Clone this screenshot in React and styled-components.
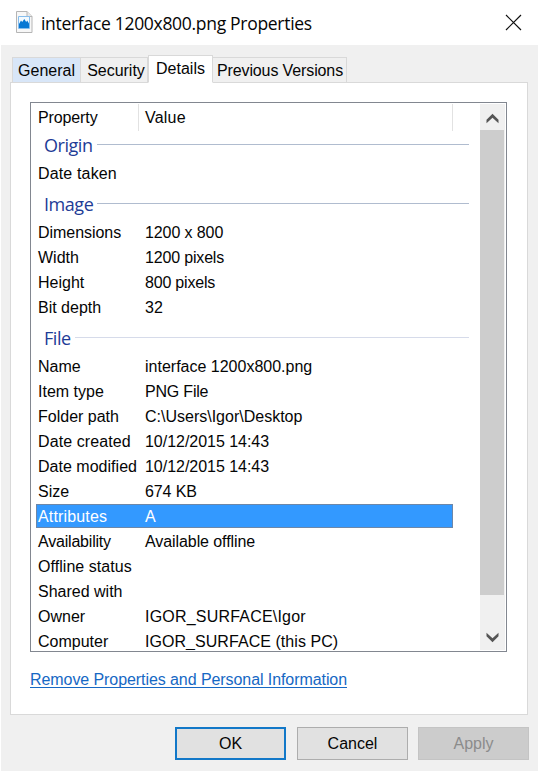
import React from "react";
import styled, { createGlobalStyle } from "styled-components";

const Global = createGlobalStyle`
  *, *::before, *::after { box-sizing: border-box; }
  html, body { margin: 0; background: #fff; }
  button { font: inherit; margin: 0; }
`;

const Dialog = styled.main`
  width: 539px;
  height: 772px;
  display: flex;
  flex-direction: column;
  overflow: hidden;
  background: #fff;
  color: #050505;
  font: 16px/25px "Liberation Sans", Arial, sans-serif;
  white-space: nowrap;
`;

const TitleBar = styled.header`
  height: 45px;
  flex: none;
  display: flex;
  align-items: center;
  padding: 0 17px 0 16px;
`;

const FileIcon = styled.svg`
  width: 17px;
  height: 22px;
  margin-top: -1px;
`;

const Title = styled.h1`
  margin: 0 0 0 8px;
  flex: 1;
  font: 400 17.5px/24px "Open Sans", "Noto Sans", sans-serif;
  letter-spacing: -0.3px;
`;

const CloseButton = styled.button`
  display: flex;
  padding: 0;
  border: 0;
  background: none;
  color: #111;
`;

const Body = styled.div`
  flex: none;
  height: 726px;
  margin: 0 1px;
  padding: 10px 9px 0;
  background: #f0f0f0;
`;

const Tabs = styled.nav`
  display: flex;
  align-items: flex-end;
  height: 28px;
  padding-left: 2px;
  margin-bottom: -1px;
`;

const Tab = styled.button`
  width: ${(p) => p.$width}px;
  height: ${(p) => (p.$active ? 28 : 26)}px;
  padding: 0 0 ${(p) => (p.$active ? 2 : 0)}px ${(p) => p.$inset || 0}px;
  line-height: 25px;
  border: 1px solid #d9d9d9;
  border-left-width: ${(p) => (p.$first || p.$active ? 1 : 0)}px;
  border-bottom-color: ${(p) => (p.$active ? "#fff" : "#d9d9d9")};
  background: ${(p) => (p.$active ? "#fff" : p.$hover ? "#d8e6f8" : "#f0f0f0")};
  color: inherit;
  text-align: center;
  letter-spacing: ${(p) => p.$track || 0}px;
`;

const Panel = styled.section`
  height: 633px;
  width: 518px;
  padding: 19px;
  border: 1px solid #d9d9d9;
  background: #fff;
`;

const ListBox = styled.div`
  display: flex;
  width: 477px;
  height: 550px;
  padding: 1px 1px 1px 5px;
  border: 1px solid #828790;
  overflow: hidden;
`;

const List = styled.div`
  flex: 1;
  height: 546px;
  overflow: hidden;
`;

const HeaderRow = styled.div`
  display: grid;
  grid-template-columns: 103px 314px;
  height: 26px;
  width: 417px;
`;

const HeaderCell = styled.div`
  border-right: 1px solid #e2e2e2;
  padding-left: ${(p) => p.$pad}px;
  line-height: 27px;
  letter-spacing: ${(p) => p.$track || 0}px;
`;

const GroupHeading = styled.h2`
  display: flex;
  align-items: center;
  gap: 4px;
  width: 433px;
  height: ${(p) => p.$height}px;
  margin: 0;
  padding: ${(p) => p.$drop}px 0 ${(p) => p.$lift}px 8px;
  color: #1e3c96;
  font: 400 18px/24px "Open Sans", "Noto Sans", sans-serif;
  letter-spacing: -0.45px;

  &::after {
    content: "";
    flex: 1;
    height: 1px;
    margin-bottom: 1px;
    background: ${(p) => p.$rule};
  }
`;

const Row = styled.div`
  display: grid;
  grid-template-columns: 107px 1fr;
  width: 417px;
  height: ${(p) => (p.$selected ? 24 : 25)}px;
  margin-bottom: ${(p) => (p.$selected ? 1 : 0)}px;
  padding-left: 2px;
  line-height: 26px;
  color: ${(p) => (p.$selected ? "#fff" : "inherit")};
  background: ${(p) => (p.$selected ? "#3399ff" : "none")};
  box-shadow: ${(p) => (p.$selected ? "inset 0 0 0 1px #6d87a8" : "none")};
`;

const Cell = styled.span`
  letter-spacing: ${(p) => p.$track || 0}px;
`;

const ScrollBar = styled.div`
  width: 25px;
  height: 546px;
  flex: none;
  display: flex;
  flex-direction: column;
  background: #f0f0f0;
`;

const ScrollArrow = styled.svg`
  width: 25px;
  height: 26px;
  flex: none;
  fill: #555;
`;

const ScrollThumb = styled.div`
  width: 24px;
  height: 465px;
  margin-bottom: 29px;
  background: #cdcdcd;
`;

const RemoveLink = styled.a`
  display: block;
  width: 317px;
  height: 19px;
  margin-top: 17px;
  line-height: 22px;
  border-bottom: 1px solid #1668c4;
  color: #1668c4;
  letter-spacing: -0.075px;
`;

const Footer = styled.footer`
  display: flex;
  padding: 12px 0 0 165px;
`;

const Button = styled.button`
  flex: none;
  width: 111px;
  height: 33px;
  padding: 0;
  line-height: 29px;
  border: ${(p) => (p.$primary ? "2px solid #1278c8" : "1px solid #adadad")};
  background: #e1e1e1;
  color: #050505;

  & + & { margin-left: 11px; }

  &:disabled {
    margin-left: 10px;
    border-color: #c4c4c4;
    background: #cccccc;
    color: #8b8b8b;
  }
`;

/* Each row: name, value, and optional letter-spacing for each of the two. */
const GROUPS = [
  {
    title: "Origin", height: 31, drop: 0, lift: 2, rule: "#b0bccf",
    rows: [["Date taken", "", 0.15]],
  },
  {
    title: "Image", height: 34, drop: 1, lift: 0, rule: "#b0bccf",
    rows: [
      ["Dimensions", "1200 x 800", -0.05, -0.1],
      ["Width", "1200 pixels", 0, -0.17],
      ["Height", "800 pixels", 0, -0.2],
      ["Bit depth", "32"],
    ],
  },
  {
    title: "File", height: 34, drop: 1, lift: 0, rule: "#d6dbea",
    rows: [
      ["Name", "interface 1200x800.png"],
      ["Item type", "PNG File", 0, -0.2],
      ["Folder path", "C:\\Users\\Igor\\Desktop"],
      ["Date created", "10/12/2015 14:43", 0.1, -0.03],
      ["Date modified", "10/12/2015 14:43", 0.02, -0.03],
      ["Size", "674 KB", 0, -0.1],
      ["Attributes", "A", 0.15],
      ["Availability", "Available offline", -0.2, -0.08],
      ["Offline status", "", 0.05],
      ["Shared with", ""],
      ["Owner", "IGOR_SURFACE\\Igor", 0, 0.2],
      ["Computer", "IGOR_SURFACE (this PC)", 0, 0.05],
    ],
  },
];

export default function App() {
  return (
    <Dialog>
      <Global />
      <TitleBar>
        <FileIcon viewBox="0 0 17 22">
          <path d="M.5.500h10.500l5 5v16H.5z" fill="#f7f7f7" stroke="#b5b5b5" />
          <path d="M11 .5v5h5" fill="#e8e8e8" stroke="#b5b5b5" />
          <path d="M2.500 5.500h11v12h-11z" fill="#f2f9fe" stroke="#86bdec" />
          <path d="M3 17v-4l2-3.500 1.200 1.500L8.300 8l1.900 3 1-1.500L13 12.500V17z" fill="#0878d4" />
        </FileIcon>
        <Title>interface 1200x800.png Properties</Title>
        <CloseButton aria-label="Close">
          <svg width="17" height="17" viewBox="0 0 17 17" fill="none" stroke="currentColor" strokeWidth="1.200">
            <path d="M1 1l15 15M16 1L1 16" />
          </svg>
        </CloseButton>
      </TitleBar>
      <Body>
        <Tabs>
          <Tab $width={69} $first $hover>General</Tab>
          <Tab $width={67} $inset={4} $track={-0.03}>Security</Tab>
          <Tab $width={65} $active>Details</Tab>
          <Tab $width={134} $inset={1} $track={-0.12}>Previous Versions</Tab>
        </Tabs>
        <Panel>
          <ListBox>
            <List>
              <HeaderRow>
                <HeaderCell $pad={2} $track={-0.12}>Property</HeaderCell>
                <HeaderCell $pad={6} $track={0.2}>Value</HeaderCell>
              </HeaderRow>
              {GROUPS.map((g) => (
                <React.Fragment key={g.title}>
                  <GroupHeading $height={g.height} $drop={g.drop} $lift={g.lift} $rule={g.rule}>
                    {g.title}
                  </GroupHeading>
                  {g.rows.map(([name, value, nameTrack, valueTrack]) => (
                    <Row key={name} $selected={name === "Attributes"}>
                      <Cell $track={nameTrack}>{name}</Cell>
                      <Cell $track={valueTrack}>{value}</Cell>
                    </Row>
                  ))}
                </React.Fragment>
              ))}
            </List>
            <ScrollBar>
              <ScrollArrow viewBox="0 0 25 26">
                <path d="M12.500 9.700l6 6v3.600l-6-5.600-6 5.600v-3.600z" />
              </ScrollArrow>
              <ScrollThumb />
              <ScrollArrow viewBox="0 0 25 26">
                <path d="M12.500 18.300l6-6V8.700l-6 5.600-6-5.600v3.600z" />
              </ScrollArrow>
            </ScrollBar>
          </ListBox>
          <RemoveLink>Remove Properties and Personal Information</RemoveLink>
        </Panel>
        <Footer>
          <Button $primary>OK</Button>
          <Button>Cancel</Button>
          <Button disabled>Apply</Button>
        </Footer>
      </Body>
    </Dialog>
  );
}
